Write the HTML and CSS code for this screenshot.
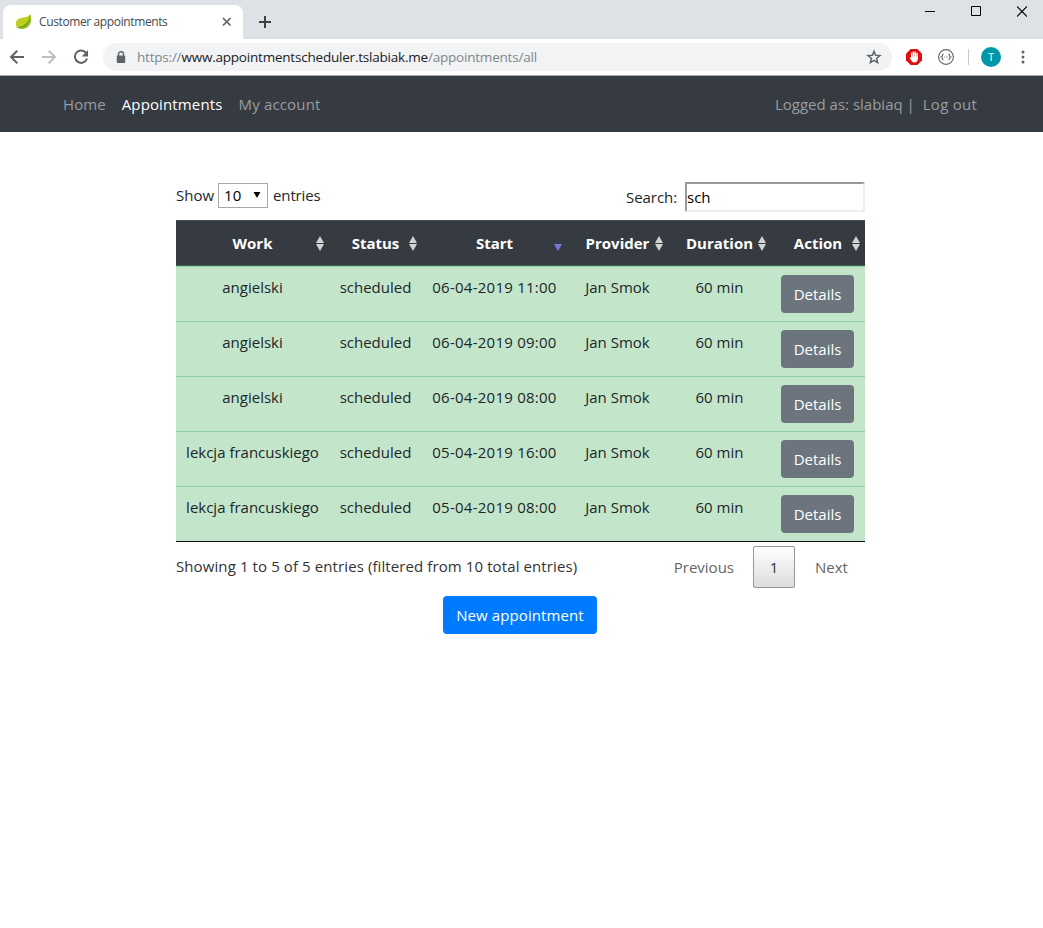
FILE: index.html
```html
<!DOCTYPE html>
<html lang="en">
<head>
<meta charset="utf-8">
<title>Customer appointments</title>
<link rel="stylesheet" href="styles.css">
</head>
<body>
<header class="browser">
  <div class="tabstrip">
    <div class="tab">
      <svg class="leaf" width="17" height="16" viewBox="0 0 17 16"><path d="M15.400.3C16.500 5 16.300 10 12.900 12.800 9.500 15.500 4.500 15.300 2.300 13.500.2 11.500.3 7.500 2.800 5.400 5.500 3.100 12.500 4.500 15.400.3Z" fill="#c0ce20"/><path d="M15.400.3C16.500 5 16.300 10 12.900 12.800 9.500 15.500 4.500 15.300 2.300 13.500 7.500 13 13 11 15.400.3Z" fill="#8fb522"/><path d="M1 13.300C8 13 12.500 10 14.700 4.500 13.700 10 9 14 1 13.300Z" fill="#4f8f2a"/></svg>
      <span class="tab-title">Customer appointments</span>
      <svg class="tab-close" width="10" height="10" viewBox="0 0 10 10"><path d="M1 1l7.500 7.500M8.500 1L1 8.500" stroke="#5f6368" stroke-width="1.700"/></svg>
    </div>
    <svg class="new-tab" width="14" height="14" viewBox="0 0 14 14"><path d="M7 1v12M1 7h12" stroke="#3c4043" stroke-width="2"/></svg>
    <div class="window-buttons">
      <svg width="10" height="11" viewBox="0 0 10 11"><path d="M0 5.500h10" stroke="#000"/></svg>
      <svg width="10" height="11" viewBox="0 0 10 11"><path d="M.5.5h9v9h-9z" fill="none" stroke="#000"/></svg>
      <svg width="10" height="11" viewBox="0 0 10 11"><path d="M0 .5l10 10M10 .5l-10 10" stroke="#000" stroke-width="1.100"/></svg>
    </div>
  </div>
  <div class="toolbar">
    <svg class="nav-icon" width="16" height="16" viewBox="0 0 16 16"><path d="M15 8H2.500M8.300 1.700L2 8l6.300 6.300" fill="none" stroke="#5f6368" stroke-width="2"/></svg>
    <svg class="nav-icon" width="16" height="16" viewBox="0 0 16 16"><path d="M1 8h12.500M7.700 1.700L14 8l-6.300 6.300" fill="none" stroke="#bdbec0" stroke-width="2"/></svg>
    <svg class="nav-icon" width="16" height="16" viewBox="0 0 16 16"><path d="M13.300 4.300A6.200 6.200 0 1 0 14 9.500" fill="none" stroke="#5f6368" stroke-width="2"/><path d="M15 1v6.400H8.700z" fill="#5f6368"/></svg>
    <div class="omnibox">
      <svg width="10" height="13" viewBox="0 0 10 13"><path d="M2.500 5.500V3.300a2.500 2.500 0 0 1 5 0v2.200" fill="none" stroke="#5f6368" stroke-width="1.400"/><rect x=".8" y="4.500" width="8.400" height="7.500" rx="1" fill="#5f6368"/></svg>
      <span class="url">https://<b>www.appointmentscheduler.tslabiak.me</b>/appointments/all</span>
      <svg class="star" width="16" height="16" viewBox="0 0 16 16"><path d="M8 2.200l1.600 4 4.300.4-3.300 2.800 1 4.200L8 11.400l-3.600 2.200 1-4.200L2.100 6.600l4.300-.4z" fill="none" stroke="#5f6368" stroke-width="1.500"/></svg>
    </div>
    <svg class="adblock" width="16" height="16" viewBox="0 0 16 16"><path d="M4.700 0h6.600L16 4.700v6.600L11.300 16H4.700L0 11.300V4.700z" fill="#e40d0d"/><path d="M5.700 9V4.300M7.500 8V2.900M9.300 8V3.200M11.100 9V4.600" stroke="#fff" stroke-width="1.500" stroke-linecap="round"/><path d="M5 7.500h6.850v2c0 2.500-1.200 4-3.500 4-1.800 0-2.500-.8-3.300-2.400L3.500 8.700l1.500-.2z" fill="#fff"/></svg>
    <svg class="brackets" width="16" height="16" viewBox="0 0 16 16"><circle cx="8" cy="8" r="7.400" fill="none" stroke="#5f6368" stroke-width="1.100"/><path d="M5.500 5.200c-1.800 0-.4 2.300-2 2.800 1.600.5.200 2.800 2 2.800M10.500 5.200c1.800 0 .4 2.300 2 2.800-1.600.5-.2 2.800-2 2.800" fill="none" stroke="#5f6368" stroke-width="1.200"/><path d="M6.200 8h1M8 8h.8M9.300 8h.8" stroke="#888"/></svg>
    <span class="divider"></span>
    <span class="avatar">T</span>
    <svg class="menu" width="4" height="14" viewBox="0 0 4 14"><g fill="#5f6368"><circle cx="2" cy="2" r="1.500"/><circle cx="2" cy="7" r="1.500"/><circle cx="2" cy="12" r="1.500"/></g></svg>
  </div>
</header>
<nav class="navbar">
  <a class="link-home">Home</a><a class="active">Appointments</a><a class="link-account">My account</a>
  <span class="user">Logged as: slabiaq |</span><a class="logout">Log out</a>
</nav>
<main class="content">
  <div class="controls">
    <div class="length"><span class="show">Show</span><span class="select">10<svg width="8" height="7" viewBox="0 0 8 7"><path d="M.6 0h6.800L4 6z" fill="#000"/></svg></span><span class="entries">entries</span></div>
    <label class="search"><span>Search:</span><input type="text" value="sch"></label>
  </div>
  <table class="grid">
    <colgroup><col class="c-work"><col class="c-status"><col class="c-start"><col class="c-provider"><col class="c-duration"><col class="c-action"></colgroup>
    <thead><tr>
      <th>Work<i class="sort"></i></th><th>Status<i class="sort"></i></th><th>Start<i class="sort desc"></i></th><th>Provider<i class="sort"></i></th><th>Duration<i class="sort"></i></th><th>Action<i class="sort"></i></th>
    </tr></thead>
    <tbody>
      <tr><td>angielski</td><td>scheduled</td><td class="date">06-04-2019 11:00</td><td>Jan Smok</td><td>60 min</td><td><a class="btn">Details</a></td></tr>
      <tr><td>angielski</td><td>scheduled</td><td class="date">06-04-2019 09:00</td><td>Jan Smok</td><td>60 min</td><td><a class="btn">Details</a></td></tr>
      <tr><td>angielski</td><td>scheduled</td><td class="date">06-04-2019 08:00</td><td>Jan Smok</td><td>60 min</td><td><a class="btn">Details</a></td></tr>
      <tr><td>lekcja francuskiego</td><td>scheduled</td><td class="date">05-04-2019 16:00</td><td>Jan Smok</td><td>60 min</td><td><a class="btn">Details</a></td></tr>
      <tr><td>lekcja francuskiego</td><td>scheduled</td><td class="date">05-04-2019 08:00</td><td>Jan Smok</td><td>60 min</td><td><a class="btn">Details</a></td></tr>
    </tbody>
  </table>
  <div class="footer">
    <span class="info">Showing 1 to 5 of 5 entries (filtered from 10 total entries)</span>
    <div class="pager"><a class="prev">Previous</a><a class="page">1</a><a class="next">Next</a></div>
  </div>
  <a class="btn primary">New appointment</a>
</main>
</body>
</html>
```
FILE: styles.css
```css
* { box-sizing: border-box; }
body { margin: 0; background: #fff; color: #212529; font: 15px/24px "Open Sans", "Noto Sans", sans-serif; height: 928px; overflow: hidden; }
svg { display: block; flex: none; }

.tabstrip { display: flex; height: 39px; background: #dee1e6; padding-left: 3px; }
.tab { display: flex; align-items: center; width: 240px; height: 34px; margin-top: 5px; padding-left: 12px; background: #fff; border-radius: 8px 8px 0 0; }
.tab-title { width: 183px; margin-left: 7px; font-size: 12px; line-height: 16px; letter-spacing: -0.38px; color: #45494d; white-space: nowrap; }
.new-tab { margin: 15px 0 0 15px; }
.window-buttons { display: flex; gap: 36px; margin: 6px 16px 0 auto; }
.toolbar { display: flex; align-items: center; height: 37px; padding-left: 9px; border-bottom: 1px solid #a5a7aa; background: #fff; }
.nav-icon { margin-right: 16px; }
.omnibox { display: flex; align-items: center; width: 789px; height: 28px; margin-left: -2px; padding: 0 10px 0 13px; border-radius: 14px; background: #f1f3f4; }
.url { margin-left: 11px; font-size: 13.5px; line-height: 18px; letter-spacing: -0.21px; color: #80868b; white-space: nowrap; }
.url b { font-weight: 400; color: #202124; }
.star { margin-left: auto; }
.adblock { margin-left: 14px; }
.brackets { margin-left: 16px; }
.divider { width: 1px; height: 16px; margin-left: 14px; background: #c8cacd; }
.avatar { width: 20px; height: 20px; margin-left: 12px; border-radius: 50%; background: #0097a7; color: #fff; font-size: 11px; line-height: 20px; text-align: center; }
.menu { margin-left: 20px; }

.navbar { display: flex; align-items: center; height: 56px; padding: 0 66px 0 63px; background: #363a41; color: #999da0; white-space: nowrap; letter-spacing: 0.08px; }
.navbar a + a { margin-left: 16px; }
.navbar .active { color: #fff; letter-spacing: 0.13px; }
.link-account { letter-spacing: 0.17px; }
.user { margin-left: auto; letter-spacing: 0; }
.logout { margin-left: 8px; letter-spacing: 0.25px; }

.content { width: 689px; margin: 50px 0 0 176px; display: flex; flex-direction: column; }
.controls { display: flex; justify-content: space-between; height: 38px; }
.length { display: flex; height: 26px; align-items: center; }
.entries { letter-spacing: -0.15px; }
.select { display: flex; align-items: center; justify-content: space-between; width: 50px; height: 25px; margin: 0 5px 0 4px; padding: 0 6px 0 5px; border: 1px solid #a9a9a9; color: #000; }
.search { display: flex; height: 30px; align-items: center; letter-spacing: -0.08px; }
.search input { width: 180px; height: 30px; margin-left: 8px; padding: 1px 0 1px 0; border: 2px solid; border-color: #9a9a9a #eee #eee #9a9a9a; font: inherit; color: #000; }
.grid { width: 689px; table-layout: fixed; border-collapse: separate; border-spacing: 0; border-bottom: 1px solid #111; text-align: center; }
.c-work { width: 153px; } .c-status { width: 93px; } .c-start { width: 145px; }
.c-provider { width: 101px; } .c-duration { width: 103px; } .c-action { width: 94px; }
th { position: relative; height: 46px; padding: 0; background: #363a41; border-top: 1px solid #454d55; border-bottom: 1px solid #3f6a51; color: #fff; font-weight: 700; }
td { height: 55px; padding: 8px 0 0; vertical-align: top; background: #c3e6cb; border-top: 1px solid #8fd19e; white-space: nowrap; }
.date { letter-spacing: 0.25px; }
.sort { position: absolute; right: 4px; top: 15px; width: 9px; height: 15px; }
.sort::before, .sort::after { content: ""; position: absolute; left: 0; border: solid transparent; border-width: 0 4.500px 7px; border-bottom-color: #d3d3d3; }
.sort::after { top: 8px; border-width: 7px 4.500px 0; border-top-color: #d3d3d3; }
.sort.desc::before { display: none; }
.sort.desc::after { border-top-color: #7878d8; }
.btn { display: block; width: 73px; height: 38px; margin-left: 10px; border-radius: 4px; background: #6c757d; color: #fff; line-height: 38px; text-align: center; }
.footer { display: flex; justify-content: space-between; height: 54px; color: #333; }
.info { padding-top: 12px; white-space: nowrap; letter-spacing: 0.1px; }
.pager { display: flex; margin-top: 4px; height: 42px; line-height: 42px; color: #666; }
.page { width: 42px; height: 42px; border: 1px solid #979797; border-radius: 2px; background: linear-gradient(#fff, #dcdcdc); color: #333; text-align: center; line-height: 40px; margin: 0 20px 0 19px; }
.next { width: 50px; }
.primary { width: 154px; margin-left: 267px; background: #007bff; letter-spacing: 0.1px; }
```
